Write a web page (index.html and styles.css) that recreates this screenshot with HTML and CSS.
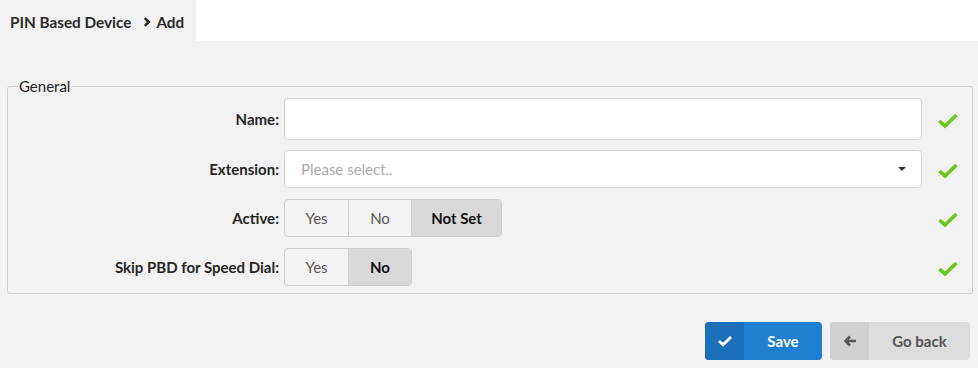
FILE: index.html
```html
<!DOCTYPE html>
<html>
<head>
<meta charset="utf-8">
<link rel="stylesheet" href="styles.css">
</head>
<body>
<header class="topbar">
  <div class="crumbs">
    <span class="crumb">PIN Based Device</span>
    <svg class="chev" width="8" height="10" viewBox="0 0 8 10"><path d="M1.8 1.2 L5.8 5 L1.8 8.8" fill="none" stroke="#222" stroke-width="2.5"/></svg>
    <span class="crumb">Add</span>
  </div>
  <div class="topfill"></div>
</header>
<main class="content">
  <fieldset class="group">
    <legend>General</legend>
    <div class="row">
      <label class="lbl">Name:</label>
      <div class="field"><input class="input tall" type="text"></div>
      <div class="ok"><svg width="22" height="16" viewBox="0 0 22 16"><path d="M2.5 8 L8 13 L19.5 2" fill="none" stroke="#6cc51b" stroke-width="3.6"/></svg></div>
    </div>
    <div class="row">
      <label class="lbl">Extension:</label>
      <div class="field"><div class="input select"><span class="ph">Please select..</span><span class="caret"></span></div></div>
      <div class="ok"><svg width="22" height="16" viewBox="0 0 22 16"><path d="M2.5 8 L8 13 L19.5 2" fill="none" stroke="#6cc51b" stroke-width="3.6"/></svg></div>
    </div>
    <div class="row">
      <label class="lbl">Active:</label>
      <div class="field">
        <div class="seg">
          <span class="opt w64">Yes</span><span class="opt w63">No</span><span class="opt on w91">Not Set</span>
        </div>
      </div>
      <div class="ok"><svg width="22" height="16" viewBox="0 0 22 16"><path d="M2.5 8 L8 13 L19.5 2" fill="none" stroke="#6cc51b" stroke-width="3.6"/></svg></div>
    </div>
    <div class="row">
      <label class="lbl">Skip PBD for Speed Dial:</label>
      <div class="field">
        <div class="seg">
          <span class="opt w64">Yes</span><span class="opt on w63">No</span>
        </div>
      </div>
      <div class="ok"><svg width="22" height="16" viewBox="0 0 22 16"><path d="M2.5 8 L8 13 L19.5 2" fill="none" stroke="#6cc51b" stroke-width="3.6"/></svg></div>
    </div>
  </fieldset>
  <div class="actions">
    <button class="btn primary"><span class="ico"><svg width="16" height="12" viewBox="0 0 16 12"><path d="M2 6 L6 9.8 L14 2" fill="none" stroke="#fff" stroke-width="2.8"/></svg></span><span class="txt">Save</span></button>
    <button class="btn secondary"><span class="ico"><svg width="14" height="12" viewBox="0 0 14 12"><path d="M13 6 H2.5 M7 1.5 L2.5 6 L7 10.5" fill="none" stroke="#555" stroke-width="2.5"/></svg></span><span class="txt">Go back</span></button>
  </div>
</main>
</body>
</html>
```
FILE: styles.css
```css
* { box-sizing: border-box; }
html, body { margin: 0; padding: 0; }
body {
  background: #f2f2f2;
  font-family: Lato, "Open Sans", sans-serif;
  font-size: 14px;
  color: #333;
  width: 978px;
  height: 368px;
  overflow: hidden;
}
.topbar { display: flex; height: 41px; }
.crumbs {
  width: 196px;
  display: flex;
  align-items: center;
  padding-left: 10px;
  padding-top: 2px;
  background: #f2f2f2;
}
.crumb { font-weight: 700; font-size: 15.3px; color: #2a2a2a; }
.chev { margin: 0 5px 0 12px; }
.topfill { flex: 1; background: #fff; }
.content { padding: 37px 5px 0 7px; }
.group {
  margin: 0;
  border: 1px solid #cfcfcf;
  border-radius: 3px;
  padding: 4px 0 7px 0;
  display: flex;
  flex-direction: column;
  gap: 10px;
}
.group legend {
  font-size: 15px;
  color: #222;
  padding: 0 1px;
  margin-left: 10px;
  line-height: 16px;
}
.row { display: flex; align-items: center; }
.row + .row + .row { margin-top: 1px; }
.lbl {
  width: 276px;
  text-align: right;
  padding-right: 5px;
  font-weight: 700;
  font-size: 15px;
  color: #262626;
}
.field { width: 638px; }
.input {
  width: 100%;
  height: 38px;
  border: 1px solid #d6d6d6;
  border-radius: 4px;
  background: #fff;
  font-family: inherit;
  font-size: 15px;
  display: block;
}
.input.tall { height: 42px; }
.select { display: flex; align-items: center; justify-content: space-between; padding: 0 16px; }
.ph { color: #aaa; font-size: 15px; }
.caret {
  width: 0; height: 0;
  border-left: 4.5px solid transparent;
  border-right: 4.5px solid transparent;
  border-top: 4.5px solid #333;
  margin-right: -1px;
}
.ok { width: 50px; display: flex; justify-content: center; padding-left: 2px; padding-top: 4px; }
.seg {
  display: inline-flex;
  height: 38px;
  border: 1px solid #cfcfcf;
  border-radius: 4px;
  overflow: hidden;
  background: #f3f3f3;
}
.opt {
  display: flex;
  align-items: center;
  justify-content: center;
  color: #555;
  font-size: 15px;
}
.opt + .opt { border-left: 1px solid #cfcfcf; }
.opt.on { background: #d9d9d9; color: #111; font-weight: 700; }
.w64 { width: 63px; }
.w63 { width: 63px; }
.w91 { width: 90px; }
.actions {
  display: flex;
  justify-content: flex-end;
  gap: 8px;
  padding-top: 28px;
  padding-right: 3px;
}
.btn {
  display: flex;
  height: 38px;
  border: none;
  border-radius: 4px;
  padding: 0;
  overflow: hidden;
  font-family: inherit;
  font-weight: 700;
  font-size: 15px;
}
.btn .ico { width: 39px; display: flex; align-items: center; justify-content: center; }
.btn .txt { flex: 1; display: flex; align-items: center; justify-content: center; }
.primary { width: 117px; background: #1f7fd0; color: #fff; }
.primary .ico { background: #1b70b9; }
.secondary { width: 140px; background: #dcdcdc; color: #555; }
.secondary .ico { background: #d0d0d0; }
```
